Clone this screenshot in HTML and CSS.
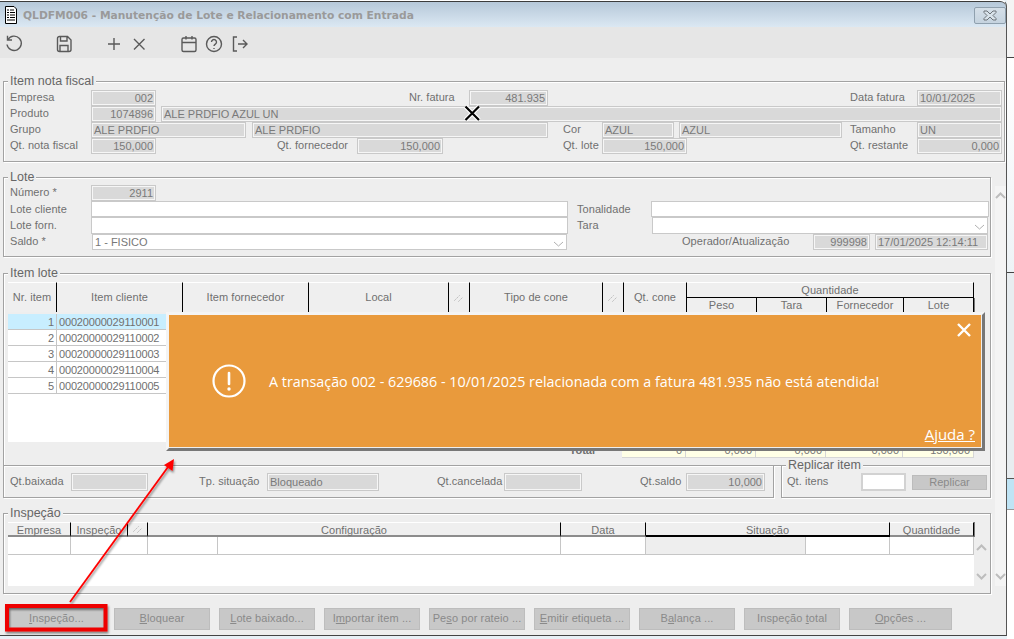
FILE: index.html
```html
<!DOCTYPE html>
<html lang="pt">
<head>
<meta charset="utf-8">
<title>QLDFM006</title>
<link rel="stylesheet" href="styles.css">
</head>
<body>
<div class="page">
  <div class="window">
    <header class="titlebar">
      <svg class="doc" width="14" height="18" viewBox="0 0 14 18"><path d="M1.5 .5H10L12.5 3V17.5H1.5Z" fill="#fff" stroke="#000"/><path d="M3 4h2M6 4h4M3 6.5h2M6 6.5h5M3 9h2M6 9h5M3 11.5h2M6 11.5h5M3 14h8" stroke="#000" stroke-width="1.2"/></svg>
      <span class="title">QLDFM006 - Manutenção de Lote e Relacionamento com Entrada</span>
      <button class="winclose"><svg width="18" height="11" viewBox="0 0 18 11"><path d="M3 1h3l3 3 3-3h3v1.500L12 5.500 15 8.500V10h-3L9 7 6 10H3V8.500L6 5.500 3 2.500Z" fill="#d8e2ea" stroke="#6c7378"/></svg></button>
    </header>
    <nav class="toolbar">
      <svg class="ti t-undo" width="20" height="20" viewBox="0 0 20 20"><path d="M4 5.500A7.200 7.200 0 1 1 3 10.500M3.500 1.800V6H8" /></svg>
      <svg class="ti t-save" width="20" height="20" viewBox="0 0 20 20"><path d="M3.500 4.500a2 2 0 0 1 2-2h8l3.500 3.500v9.500a2 2 0 0 1-2 2h-9.500a2 2 0 0 1-2-2ZM6.500 2.500v4.500h6.500v-4.500M6 17.500v-6h8v6"/></svg>
      <svg class="ti t-plus" width="20" height="20" viewBox="0 0 20 20"><path d="M4 10H16M10 4V16"/></svg>
      <svg class="ti t-x" width="20" height="20" viewBox="0 0 20 20"><path d="M5 5 15.500 15.500M15.500 5 5 15.500"/></svg>
      <svg class="ti t-cal" width="20" height="20" viewBox="0 0 20 20"><rect x="3" y="4" width="14" height="13.500" rx="1.500"/><path d="M3 8.500H17M7 2V5.500M13 2V5.500"/></svg>
      <svg class="ti t-help" width="20" height="20" viewBox="0 0 20 20"><circle cx="10" cy="10" r="7.500"/><path d="M7.500 8a2.500 2.500 0 1 1 3.800 2.100c-.9.600-1.300 1-1.300 2M10 14v.9"/></svg>
      <svg class="ti t-exit" width="20" height="20" viewBox="0 0 20 20"><path d="M7 3H3.500V17H7M8 10H17M13 6l4 4-4 4"/></svg>
    </nav>
    <main class="content">
      <section class="fs fs-nf">
        <span class="legend">Item nota fiscal</span>
        <div class="row ra">
          <span class="lbl">Empresa</span><span class="f num">002</span><i></i><span class="lbl">Nr. fatura</span><span class="f num">481.935</span><i></i><span class="lbl">Data fatura</span><span class="f">10/01/2025</span>
        </div>
        <div class="row rb">
          <span class="lbl">Produto</span><span class="f num">1074896</span><i></i><span class="f">ALE PRDFIO AZUL UN</span>
        </div>
        <div class="row rc">
          <span class="lbl">Grupo</span><span class="f">ALE PRDFIO</span><i></i><span class="f">ALE PRDFIO</span><i></i><span class="lbl">Cor</span><span class="f">AZUL</span><i></i><span class="f">AZUL</span><i></i><span class="lbl">Tamanho</span><span class="f">UN</span>
        </div>
        <div class="row rd">
          <span class="lbl">Qt. nota fiscal</span><span class="f num">150,000</span><i></i><span class="lbl">Qt. fornecedor</span><span class="f num">150,000</span><i></i><span class="lbl">Qt. lote</span><span class="f num">150,000</span><i></i><span class="lbl">Qt. restante</span><span class="f num">0,000</span>
        </div>
      </section>

      <div class="scrollarea">
        <div class="stack">
          <section class="fs fs-lote">
            <span class="legend">Lote</span>
            <div class="row re">
              <span class="lbl">Número *</span><span class="f num">2911</span>
            </div>
            <div class="row rf">
              <span class="lbl">Lote cliente</span><span class="f w"></span><i></i><span class="lbl">Tonalidade</span><span class="f w"></span>
            </div>
            <div class="row rg">
              <span class="lbl">Lote forn.</span><span class="f w"></span><i></i><span class="lbl">Tara</span><span class="f w sel"><svg class="chev" width="11" height="6" viewBox="0 0 11 6"><path d="M1 1l4.500 4L10 1"/></svg></span>
            </div>
            <div class="row rh">
              <span class="lbl">Saldo *</span><span class="f w sel">1 - FISICO<svg class="chev" width="11" height="6" viewBox="0 0 11 6"><path d="M1 1l4.500 4L10 1"/></svg></span><i></i><span class="lbl">Operador/Atualização</span><span class="f num">999998</span><i></i><span class="f">17/01/2025 12:14:11</span>
            </div>
          </section>

          <section class="fs fs-item">
            <span class="legend">Item lote</span>
            <div class="thead">
              <span class="th c1">Nr. item</span><span class="th c2">Item cliente</span><span class="th c3">Item fornecedor</span><span class="th c4">Local</span><span class="th c5 ic"><svg width="12" height="10" viewBox="0 0 12 10"><path d="M1.500 7.500 6.500 2.500M5.500 8.500 10 4"/></svg></span><span class="th c6">Tipo de cone</span><span class="th c5 ic"><svg width="12" height="10" viewBox="0 0 12 10"><path d="M1.500 7.500 6.500 2.500M5.500 8.500 10 4"/></svg></span><span class="th c7">Qt. cone</span>
              <div class="qgroup">
                <span class="qhead">Quantidade</span>
                <div class="qsub"><span class="th q1">Peso</span><span class="th q1">Tara</span><span class="th q2">Fornecedor</span><span class="th q3">Lote</span></div>
              </div>
            </div>
            <div class="tbody">
              <div class="tr on"><span class="td c1 num">1</span><span class="td c2x">00020000029110001</span></div>
              <div class="tr"><span class="td c1 num">2</span><span class="td c2x">00020000029110002</span></div>
              <div class="tr"><span class="td c1 num">3</span><span class="td c2x">00020000029110003</span></div>
              <div class="tr"><span class="td c1 num">4</span><span class="td c2x">00020000029110004</span></div>
              <div class="tr"><span class="td c1 num">5</span><span class="td c2x">00020000029110005</span></div>
            </div>
            <div class="tfoot">
              <span class="tlabel">Total</span><span class="tc t0">0</span><span class="tc t1">0,000</span><span class="tc t1">0,000</span><span class="tc t2">0,000</span><span class="tc t3">150,000</span>
            </div>
          </section>

          <div class="lower">
            <section class="fs fs-sit">
              <span class="lbl l-baix">Qt.baixada</span><span class="f f-baix"></span>
              <span class="lbl l-tp">Tp. situação</span><span class="f f-tp">Bloqueado</span>
              <span class="lbl l-canc">Qt.cancelada</span><span class="f f-canc"></span>
              <span class="lbl l-sal">Qt.saldo</span><span class="f f-sal num">10,000</span>
            </section>
            <section class="fs fs-rep">
              <span class="legend">Replicar item</span>
              <span class="lbl l-it">Qt. itens</span><span class="f w f-it"></span><span class="repbtn">Replicar</span>
            </section>
          </div>

          <section class="fs fs-insp">
            <span class="legend">Inspeção</span>
            <div class="thead2">
              <span class="th2 d1">Empresa</span><span class="th2 d2">Inspeção</span><span class="th2 d3 ic"><svg width="12" height="10" viewBox="0 0 12 10"><path d="M1.500 7.500 6.500 2.500M5.500 8.500 10 4"/></svg></span><span class="th2 d4">Configuração</span><span class="th2 d5">Data</span><span class="th2 d6">Situação</span><span class="th2 d7">Quantidade</span>
            </div>
            <div class="ibody">
              <div class="igrid">
                <div class="irow">
                  <span class="ic1"></span><span class="ic2"></span><span class="ic3"></span><span class="ic4"></span><span class="ic5"></span><span class="ic6"></span><span class="ic6b"></span><span class="ic7"></span>
                </div>
              </div>
              <div class="iscroll">
                <svg class="sc" width="11" height="7" viewBox="0 0 11 7"><path d="M1 6l4.500-4.500L10 6"/></svg>
                <svg class="sc" width="11" height="7" viewBox="0 0 11 7"><path d="M1 1l4.500 4.500L10 1"/></svg>
              </div>
            </div>
          </section>
        </div>
        <div class="vscroll">
          <svg class="sc" width="11" height="7" viewBox="0 0 11 7"><path d="M1 6l4.500-4.500L10 6"/></svg>
          <svg class="sc" width="11" height="7" viewBox="0 0 11 7"><path d="M1 1l4.500 4.500L10 1"/></svg>
        </div>
      </div>

      <div class="buttons">
        <span class="btn first"><u>I</u>nspeção...</span>
        <span class="btn"><u>B</u>loquear</span>
        <span class="btn"><u>L</u>ote baixado...</span>
        <span class="btn">I<u>m</u>portar item ...</span>
        <span class="btn">Pe<u>s</u>o por rateio ...</span>
        <span class="btn"><u>E</u>mitir etiqueta ...</span>
        <span class="btn">B<u>a</u>lança ...</span>
        <span class="btn">Inspeção <u>t</u>otal</span>
        <span class="btn last"><u>O</u>pções ...</span>
      </div>
    </main>

    <aside class="toast">
      <svg class="toast-close" width="16" height="16" viewBox="0 0 16 16"><path d="M2 2 14 14M14 2 2 14"/></svg>
      <div class="toast-msg">
        <svg width="34" height="34" viewBox="0 0 34 34"><circle cx="17" cy="17" r="15.500" fill="none" stroke="#fff" stroke-width="2.200"/><path d="M17 9V20" stroke="#fff" stroke-width="2.600" stroke-linecap="round"/><circle cx="17" cy="25" r="1.700" fill="#fff"/></svg>
        <span>A transação 002 - 629686 - 10/01/2025 relacionada com a fatura 481.935 não está atendida!</span>
      </div>
      <a class="toast-help">Ajuda ?</a>
    </aside>

    <svg class="marks" width="1014" height="639" viewBox="0 0 1014 639">
      <defs><filter id="sh" x="-20%" y="-20%" width="140%" height="140%"><feDropShadow dx="1" dy="2" stdDeviation="1.200" flood-color="#000" flood-opacity=".45"/></filter></defs>
      <g filter="url(#sh)">
        <path d="M70 602 168 467" stroke="#f00" stroke-width="1.800" fill="none"/>
        <path d="M174 459 172.500 471 164 465Z" fill="#f00"/>
        <rect x="7" y="606" width="98.500" height="23.500" fill="none" stroke="#ee0000" stroke-width="4"/>
      </g>
      <path d="M465.500 106.500 479 120M479 106.500 465.500 120" stroke="#fff" stroke-width="4.500"/>
      <path d="M465.500 106.500 479 120M479 106.500 465.500 120" stroke="#000" stroke-width="2.200"/>
    </svg>
  </div>
  <div class="behind">
    <div class="b1"></div><div class="b2"></div><div class="b3"></div><div class="b4"></div><div class="b5"></div>
  </div>
</div>
</body>
</html>
```

FILE: styles.css
```css
html, body { margin: 0; padding: 0; }
body { width: 1014px; height: 639px; overflow: hidden; background: #e8f0f6; font-family: "Liberation Sans", Arial, sans-serif; font-size: 12px; color: #707070; }
.page { display: flex; width: 1014px; height: 639px; }
.window { position: relative; width: 1007px; height: 636px; box-sizing: border-box; border-top: 1px solid #fff; background: #eeeeee; border-bottom: 1px solid #444; border-right: 1px solid #555; border-top-right-radius: 6px; overflow: visible; display: flex; flex-direction: column; }

.titlebar { height: 25px; flex: none; border-top: 1px solid #3c3c3c; border-top-right-radius: 6px; background: linear-gradient(#b6c8d9, #dbe8f3); display: flex; align-items: center; padding: 0 0 0 4px; box-sizing: content-box; }
.doc { flex: none; margin-right: 5px; }
.title { font-family: "DejaVu Sans", sans-serif; font-weight: 700; font-size: 10.700px; color: #9a9a9a; white-space: nowrap; padding-top: 2px; }
.winclose { margin: 2px 0 0 auto; width: 32px; height: 17px; padding: 0; border: 1px solid #8fa0ae; border-radius: 2px; background: linear-gradient(#d5dfe8, #c5d3df); display: flex; align-items: center; justify-content: center; }

.toolbar { height: 31px; flex: none; background: #e6e6e6; display: flex; align-items: center; padding: 2px 0 0 4px; box-sizing: border-box; }
.ti { flex: none; fill: none; stroke: #5a5a5a; stroke-width: 1.400; }
.t-save { margin-left: 30px; }
.t-plus { margin-left: 30px; }
.t-x { margin-left: 5px; }
.t-cal { margin-left: 30px; }
.t-help { margin-left: 5px; }
.t-exit { margin-left: 6px; }

.content { flex: 1; padding: 23px 0 0 3px; min-height: 0; }

.fs { position: relative; box-sizing: border-box; border: 1px solid #a2a2a2; box-shadow: inset 1px 1px 0 #fff, 1px 1px 0 #fff; }
.legend { position: absolute; left: 4px; top: -8px; padding: 0 2px; height: 16px; line-height: 15px; background: #eee; font-size: 12.500px; color: #666; }

.fs-nf { width: 1002px; height: 81px; padding: 8px 0 0 6px; }
.fs-lote { width: 988px; height: 80px; padding: 7px 0 0 6px; }
.fs-item { width: 988px; height: 193px; margin-top: 16px; padding: 8px 0 0 4px; }
.fs-insp { width: 988px; height: 81px; margin-top: 15px; padding: 8px 0 0 4px; }

.row { display: grid; height: 16px; align-items: stretch; }
.ra { grid-template-columns: 81px 65px 253px 60px 79px 302px 67px 85px; }
.rb { grid-template-columns: 81px 65px 5px 841px; }
.rc { grid-template-columns: 81px 155px 6px 296px 15px 39px 72px 5px 163px 8px 67px 85px; }
.rd { grid-template-columns: 81px 65px 121px 80px 86px 120px 39px 85px 163px 67px 85px; }
.re { grid-template-columns: 81px 65px; }
.rf { grid-template-columns: 81px 477px 9px 74px 338px; }
.rg { grid-template-columns: 81px 477px 9px 75px 336px; height: 17px; }
.rh { grid-template-columns: 82px 475px 115px 131px 57px 5px 113px; }
.rf .lbl, .rg .lbl { padding-top: 1px; }

.lbl { display: block; line-height: 15px; font-size: 11px; letter-spacing: .05px; color: #707070; white-space: nowrap; }
.f { display: block; box-sizing: border-box; position: relative; background: #d9d9d9; border: 1px solid #c9c9c9; box-shadow: inset 0 0 0 1px #f6f6f6; padding: 0 2px; line-height: 15px; font-size: 11px; color: #7a7a7a; white-space: nowrap; overflow: hidden; }
.num { text-align: right; }
.f.w { background: #fff; box-shadow: none; color: #777; }
.chev { position: absolute; right: 2px; top: 6px; fill: none; stroke: #b0b0b0; stroke-width: 1; }

.scrollarea { display: flex; margin-top: 15px; }
.stack { width: 988px; flex: none; }
.vscroll { margin: 9px 0 0 4px; width: 11px; height: 400px; padding: 6px 0; box-sizing: border-box; background: #f4f4f4; display: flex; flex-direction: column; justify-content: space-between; align-items: center; }
.sc { fill: none; stroke: #bdbdbd; stroke-width: 2; flex: none; }

.thead { display: flex; height: 31px; width: 966px; }
.th { box-sizing: border-box; height: 30px; line-height: 28px; text-align: center; font-size: 11px; letter-spacing: .05px; color: #707070; background: #efefef; border-top: 1px solid #fff; border-right: 1px solid #000; box-shadow: 1px 0 0 #777; white-space: nowrap; }
.ic { display: flex; align-items: center; justify-content: center; }
.ic svg { fill: none; stroke: #aaa; stroke-width: 1; stroke-dasharray: 1.500 1.500; }
.c1 { width: 49px; }
.c2 { width: 126px; }
.c3 { width: 126px; }
.c4 { width: 140px; }
.c5 { width: 21px; }
.c6 { width: 133px; }
.c7 { width: 63px; }
.qgroup { width: 287px; display: flex; flex-direction: column; }
.qhead { height: 16px; box-sizing: border-box; line-height: 15px; text-align: center; font-size: 11px; letter-spacing: .05px; background: #efefef; border-top: 1px solid #fff; border-right: 1px solid #000; border-bottom: 1px solid #000; }
.qsub { display: flex; }
.qsub .th { height: 14px; line-height: 15px; border-top: 0; }
.q1 { width: 70px; }
.q2 { width: 77px; }
.q3 { width: 70px; }

.tbody { width: 966px; height: 128px; background: #fff; margin-top: 1px; }
.tr { display: flex; height: 16px; }
.td { box-sizing: border-box; height: 16px; line-height: 16px; font-size: 11px; padding: 0 2px; color: #707070; border-right: 1px solid #c6c6c6; border-bottom: 1px solid #c6c6c6; letter-spacing: -.17px; }
.td.c1 { width: 49px; }
.c2x { width: 110px; }
.tr.on .td { background: #c8eeff; }

.tfoot { display: flex; width: 966px; height: 16px; justify-content: flex-end; }
.tlabel { font-weight: 700; font-size: 11px; line-height: 16px; color: #707070; margin-right: 27px; }
.tc { box-sizing: border-box; background: #ffffe6; border: 1px solid #d6d6d6; border-left: 0; text-align: right; padding-right: 3px; font-size: 11px; line-height: 14px; color: #777; }
.t0 { width: 64px; }
.t1 { width: 70px; }
.t2 { width: 77px; }
.t3 { width: 71px; }

.lower { display: flex; height: 33px; margin-top: -1px; }
.fs-sit { width: 771px; height: 33px; display: grid; grid-template-columns: 61px 77px 51px 68px 112px 58px 67px 78px 58px 46px 79px; align-items: start; padding: 7px 0 0 6px; }
.fs-sit .f { height: 18px; line-height: 16px; }
.fs-sit .lbl { line-height: 16px; }
.fs-sit .l-tp { grid-column: 4; }
.fs-sit .f-tp { grid-column: 5; }
.fs-sit .l-canc { grid-column: 7; }
.fs-sit .f-canc { grid-column: 8; }
.fs-sit .l-sal { grid-column: 10; }
.fs-sit .f-sal { grid-column: 11; }
.fs-rep { width: 210px; height: 33px; margin-left: 7px; display: flex; align-items: flex-start; padding: 7px 0 0 5px; }
.l-it { width: 74px; line-height: 16px; }
.f-it { width: 45px; height: 18px; border-width: 2px; border-color: #d2d2d2; }
.repbtn { width: 75px; height: 15px; margin: 2px 0 0 6px; box-sizing: border-box; background: #c8c8c8; border: 1px solid #bcbcbc; text-align: center; line-height: 13px; font-size: 11px; color: #8a8a8a; }

.thead2 { display: flex; height: 15px; width: 966px; }
.th2 { box-sizing: border-box; height: 15px; line-height: 15px; text-align: center; font-size: 11px; letter-spacing: .05px; color: #707070; background: #efefef; border-top: 1px solid #fff; border-right: 1px solid #000; border-bottom: 2px solid #8c8c8c; box-shadow: 1px 0 0 #777; white-space: nowrap; }
.d1 { width: 63px; }
.d2 { width: 57px; }
.d3 { width: 20px; }
.d4 { width: 413px; }
.d5 { width: 85px; }
.d6 { width: 244px; border-bottom-color: #000; }
.d7 { width: 84px; }
.ibody { display: flex; height: 49px; }
.igrid { width: 966px; background: #fff; height: 49px; }
.irow { display: flex; height: 18px; border-bottom: 1px solid #c6c6c6; box-sizing: border-box; }
.irow span { box-sizing: border-box; border-right: 1px solid #c6c6c6; }
.ic1 { width: 63px; }
.ic2 { width: 77px; }
.ic3 { width: 70px; }
.ic4 { width: 343px; }
.ic5 { width: 85px; }
.ic6 { width: 160px; background: #eeeeee; }
.ic6b { width: 84px; }
.ic7 { width: 84px; }
.iscroll { width: 15px; display: flex; flex-direction: column; justify-content: space-between; align-items: center; padding: 7px 0 6px; box-sizing: border-box; height: 49px; }

.buttons { display: flex; gap: 9px; margin: 14px 0 0 5px; }
.btn { box-sizing: border-box; width: 96px; height: 22px; background: #c8c8c8; border: 1px solid #bdbdbd; text-align: center; line-height: 19px; font-size: 11px; letter-spacing: .1px; color: #8a8a8a; white-space: nowrap; }
.btn.first { width: 97px; }
.btn.last { width: 103px; }

.toast { position: absolute; left: 166px; top: 311px; width: 819px; height: 139px; box-sizing: border-box; background: #e99a3c; border-top: 3px solid #f4f4f4; border-left: 3px solid #f4f4f4; border-right: 3px solid #777; border-bottom: 3px solid #777; box-shadow: inset -1px -1px 0 #eee; display: flex; flex-direction: column; color: #fff; }
.toast-close { position: absolute; right: 10px; top: 7px; fill: none; stroke: #fff; stroke-width: 2.400; }
.toast-msg { display: flex; align-items: center; gap: 23px; padding: 49px 0 0 43px; font-family: "Open Sans", sans-serif; font-size: 14.330px; white-space: nowrap; }
.toast-help { position: absolute; right: 7px; bottom: 4px; font-family: "Open Sans", sans-serif; font-size: 15px; color: #fff; text-decoration: underline; }

.marks { position: absolute; left: 0; top: -1px; pointer-events: none; }

.behind { width: 7px; height: 639px; flex: none; display: flex; flex-direction: column; background: #fff; }
.b1 { height: 57px; background: #f4f4f4; border-bottom: 1px solid #444; }
.b2 { height: 214px; background: linear-gradient(#fff, #eef3f6); border-bottom: 1px solid #444; }
.b3 { height: 205px; background: #e8edf0; border-bottom: 1px solid #555; }
.b4 { height: 30px; background: #bfe4f5; border-bottom: 1px solid #999; }
.b5 { flex: 1; background: #fff; }
```
